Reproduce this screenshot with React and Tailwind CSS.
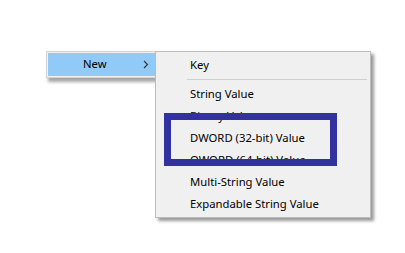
import React from "react";

const items = [
  "String Value",
  "Binary Value",
  "DWORD (32-bit) Value",
  "QWORD (64-bit) Value",
  "Multi-String Value",
  "Expandable String Value",
];

const MenuItem = ({ label }) => (
  <div className="h-[22px] flex items-center pl-[34px] text-[11.3px] text-black">
    {label}
  </div>
);

export default function App() {
  return (
    <div
      className="relative w-[405px] h-[253px] bg-white overflow-hidden"
      style={{ fontFamily: '"Noto Sans", "Open Sans", sans-serif' }}
    >
      <div className="flex items-start pt-[51px] pl-[46px]">
        {/* parent menu, clipped by the submenu */}
        <div className="w-[109px] border border-r-0 border-[#d4d4d4] bg-[#f0f0f0] pl-[1px] py-[1px] shadow-[2px_4px_3px_rgba(0,0,0,0.35)]">
          <div className="h-[23px] flex items-center bg-[#91c9f7] pl-[35px] pr-[6px] text-[11.3px] text-black">
            <span>New</span>
            <svg className="ml-auto" width="6" height="9" viewBox="0 0 6 9">
              <path d="M1 1 L4.5 4.5 L1 8" fill="none" stroke="#333" strokeWidth="1.1" />
            </svg>
          </div>
        </div>

        {/* submenu */}
        <div className="w-[216px] border border-[#bdbdbd] bg-[#f0f0f0] py-[2px] shadow-[3px_3px_3px_rgba(0,0,0,0.4)]">
          <MenuItem label="Key" />
          <div className="h-[7px] flex items-center pl-[31px] pr-[3px]">
            <div className="w-full h-px bg-[#cfcfcf]" />
          </div>
          {items.map((label) => (
            <MenuItem key={label} label={label} />
          ))}
        </div>
      </div>

      {/* highlight box */}
      <div className="absolute left-[164px] top-[113px] w-[173px] h-[53px] border-[7px] border-[#3131a0]" />
    </div>
  );
}
